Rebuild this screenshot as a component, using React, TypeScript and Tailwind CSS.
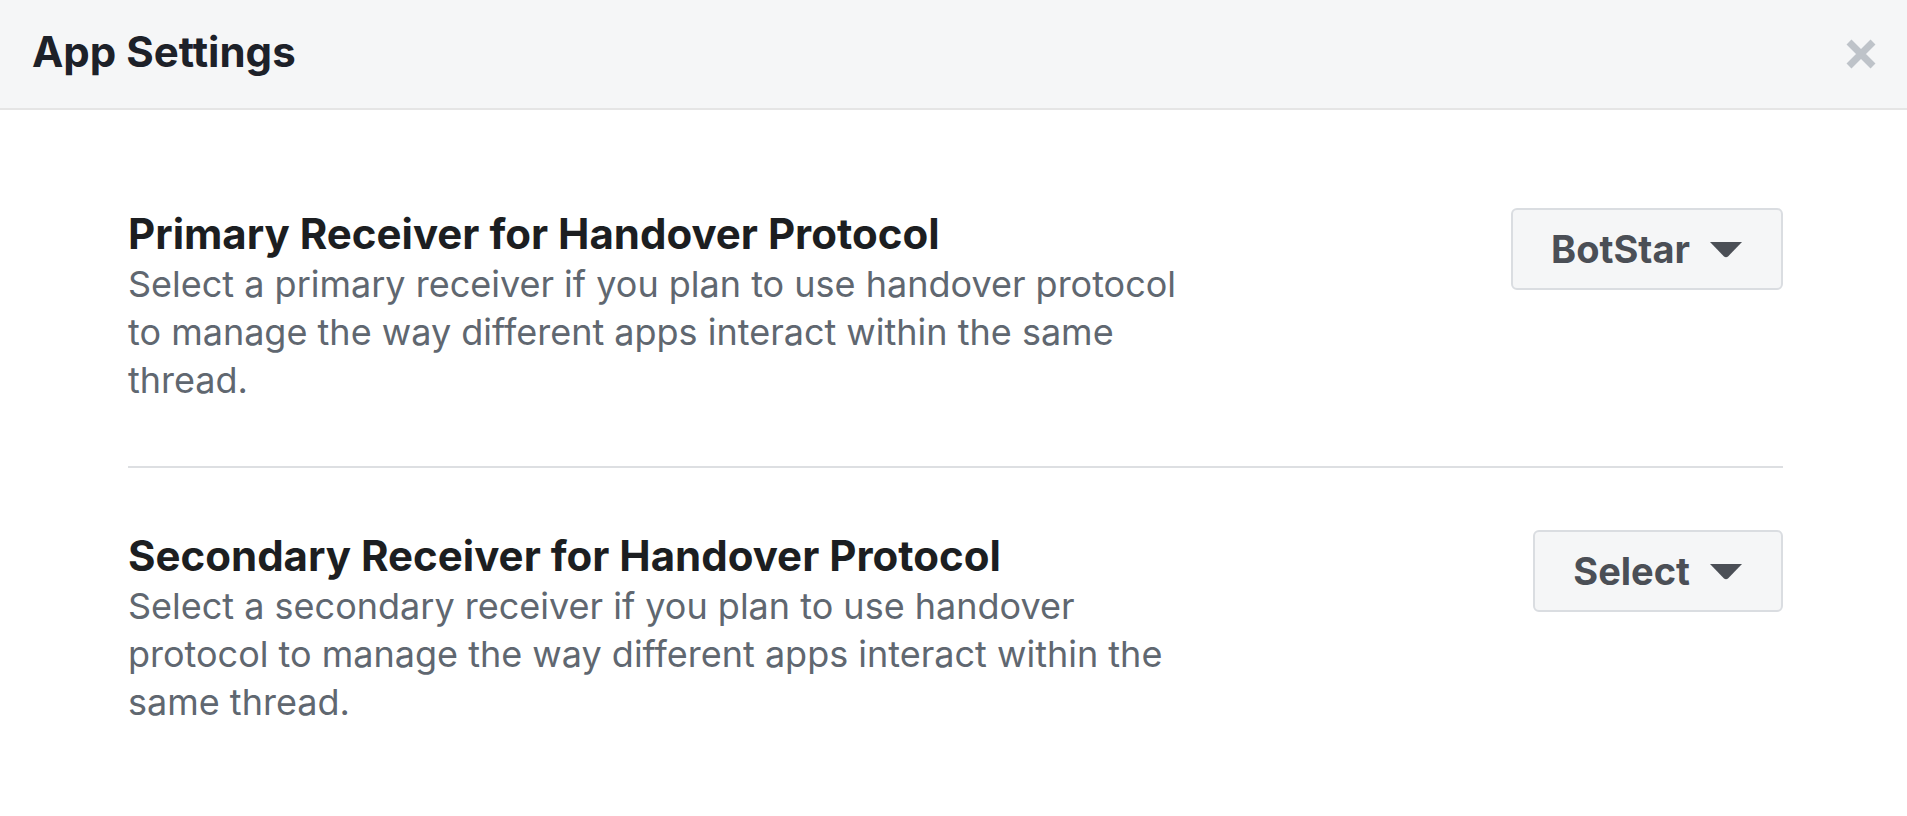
import React from "react";

function Caret() {
  return (
    <svg width="34" height="17" viewBox="0 0 34 17" className="shrink-0">
      <path d="M1 1 H33 L19 15.5 Q17 17 15 15.5 Z" fill="#4b4f56" />
    </svg>
  );
}

function CloseIcon() {
  return (
    <svg width="32" height="32" viewBox="0 0 32 32">
      <path d="M4 4 L28 28 M28 4 L4 28" stroke="#bec3c9" strokeWidth="7" strokeLinecap="butt" />
    </svg>
  );
}

function Section({ title, desc, label }: { title: string; desc: string; label: string }) {
  return (
    <div className="flex items-start justify-between py-[62px]">
      <div className="w-[1070px]">
        <div className="text-[42px] font-bold leading-[52px] text-[#1c1e21]">{title}</div>
        <div className="text-[36px] leading-[48px] text-[#606770]">{desc}</div>
      </div>
      <button className="flex h-[82px] items-center gap-[19px] rounded-[6px] border-2 border-[#dadde1] bg-[#f5f6f7] px-[38px] text-[38px] font-bold text-[#4b4f56]">
        <span>{label}</span>
        <Caret />
      </button>
    </div>
  );
}

export default function App() {
  return (
    <div className="min-h-[816px] w-full bg-white" style={{ fontFamily: "Inter, 'Noto Sans', sans-serif" }}>
      <div className="flex h-[110px] items-center justify-between border-b-2 border-[#e5e5e5] bg-[#f5f6f7] pl-[32px] pr-[30px]">
        <div className="mb-[6px] text-[42px] font-bold text-[#1d2129]">App Settings</div>
        <CloseIcon />
      </div>
      <div className="pl-[128px] pr-[124px] pt-[36px]">
        <Section
          title="Primary Receiver for Handover Protocol"
          desc="Select a primary receiver if you plan to use handover protocol to manage the way different apps interact within the same thread."
          label="BotStar"
        />
        <div className="h-[2px] bg-[#dddfe2]" />
        <Section
          title="Secondary Receiver for Handover Protocol"
          desc="Select a secondary receiver if you plan to use handover protocol to manage the way different apps interact within the same thread."
          label="Select"
        />
      </div>
    </div>
  );
}
